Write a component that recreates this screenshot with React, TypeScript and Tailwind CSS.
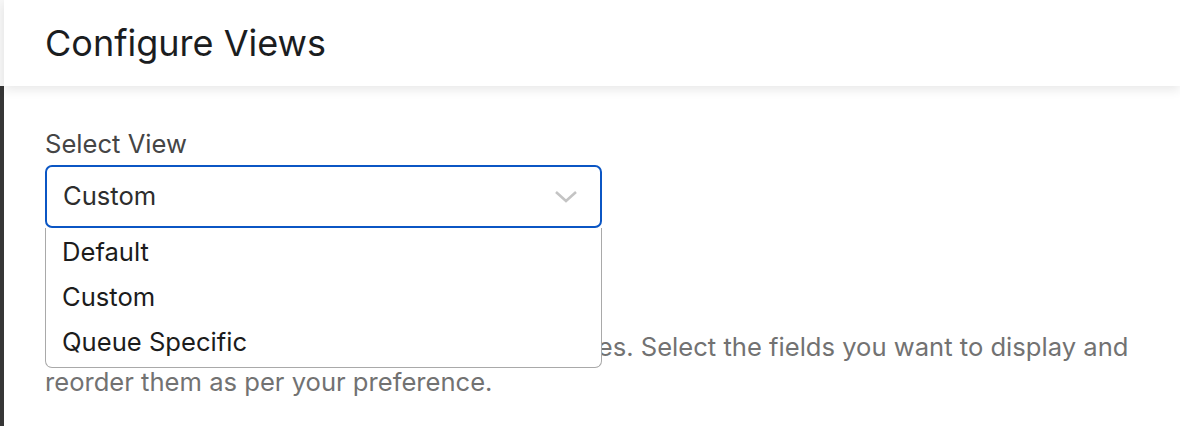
const options = ["Default", "Custom", "Queue Specific"];

export default function App() {
  return (
    <div className="w-[1180px] h-[426px] bg-white overflow-hidden flex flex-col font-['Inter',_sans-serif]">
      <div className="flex h-[86px] shrink-0 relative z-10">
        <div className="w-[4px] bg-[#f7f7f7]" />
        <header className="flex-1 bg-white flex items-center pl-[41px] shadow-[0_4px_10px_rgba(0,0,0,0.09)]">
          <h1 className="text-[36px] leading-[42px] text-[#1b1d1f]">Configure Views</h1>
        </header>
      </div>

      <main className="flex-1 border-l-4 border-[#363636] pl-[41px] pt-[43px] pr-[20px]">
        <label className="block text-[25.6px] leading-[30px] text-[#454545]">Select View</label>

        <div className="relative mt-[6px] w-[557px]">
          <button className="w-full h-[63px] flex items-center justify-between pl-[16px] pr-[22px] border-2 border-[#0b56c4] rounded-[7px] bg-white text-left">
            <span className="text-[25.6px] text-[#2d2d2d]">Custom</span>
            <svg width="24" height="14" viewBox="0 0 24 14" fill="none">
              <path d="M2 2 L12 11 L22 2" stroke="#c4c4c4" strokeWidth="2.6" />
            </svg>
          </button>

          <ul className="absolute left-0 right-0 top-full z-20 bg-white border-[1.5px] border-t-0 border-[#a9a9a9] rounded-b-[7px] py-[2px]">
            {options.map((o) => (
              <li key={o} className="h-[45px] flex items-center pl-[16px] text-[25.6px] text-[#1c1c1c]">
                {o}
              </li>
            ))}
          </ul>
        </div>

        <p className="mt-[101px] text-[25.6px] leading-[35px] text-[#727272] max-w-[1110px]">
          Customize the view for all of the distinct queues. Select the fields you want to display and reorder them as per your preference.
        </p>
      </main>
    </div>
  );
}
